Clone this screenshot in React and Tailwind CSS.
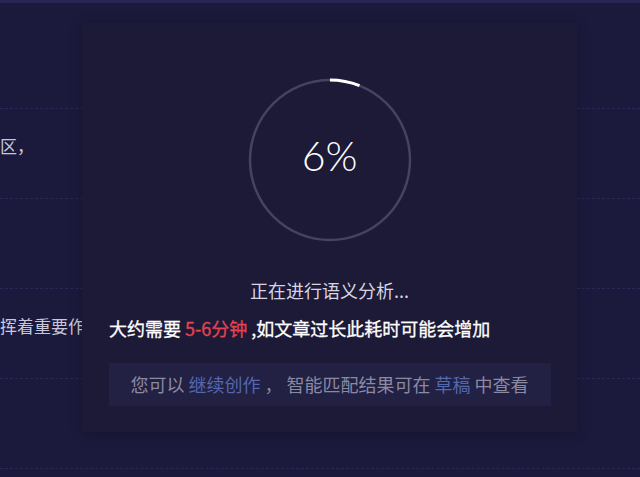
import React from 'react';

const PROGRESS = 6;
const R = 80;
const CIRC = 2 * Math.PI * R;

const rows = [
  { text: '区，' },
  { text: '' },
  { text: '挥着重要作用' },
  { text: '' },
];

export default function App() {
  return (
    <div
      className="relative w-[640px] h-[477px] overflow-hidden bg-[#1b1a3d] text-[18px]"
      style={{ fontFamily: '"Noto Sans CJK SC", "Noto Sans", sans-serif' }}
    >
      {/* top edge */}
      <div className="h-[3px] bg-[#272552]" />

      {/* page behind the dialog */}
      <div className="pt-[105px]">
        {rows.map((row, i) => (
          <div key={i} className="h-[90px] border-t border-dashed border-[#292857]">
            {row.text && (
              <p className="pt-[27px] text-[17px] text-[#c9c8da] leading-[20px] whitespace-nowrap">{row.text}</p>
            )}
          </div>
        ))}
        <div className="border-t border-dashed border-[#292857]" />
      </div>

      {/* dialog */}
      <div className="absolute left-[82px] top-[23px] w-[495px] h-[409px] bg-[#1c1a37] shadow-[0_2px_12px_rgba(0,0,0,0.25)] flex flex-col items-center pt-[55px]">
        <div className="relative w-[164px] h-[164px]">
          <svg width="164" height="164" viewBox="0 0 164 164">
            <circle cx="82" cy="82" r={R} fill="none" stroke="#45435f" strokeWidth="2.5" />
            <circle
              cx="82"
              cy="82"
              r={R}
              fill="none"
              stroke="#ffffff"
              strokeWidth="3"
              strokeDasharray={`${(CIRC * PROGRESS) / 100} ${CIRC}`}
              transform="rotate(-90 82 82)"
            />
          </svg>
          <div
            className="absolute inset-0 pb-[8px] flex items-center justify-center text-white text-[41px] font-light"
            style={{ fontFamily: 'Lato, "Open Sans", sans-serif' }}
          >
            {PROGRESS}%
          </div>
        </div>

        <p className="mt-[36px] text-[#d6d5e2] leading-[24px]">正在进行语义分析...</p>

        <p className="mt-[14px] self-start ml-[27px] text-white leading-[24px] whitespace-nowrap [-webkit-text-stroke:0.3px_white]">
          大约需要 <span className="text-[#e5434f] [-webkit-text-stroke:0.3px_#e5434f]">5-6分钟</span> ,如文章过长此耗时可能会增加
        </p>

        <div className="mt-[23px] w-[442px] h-[43px] bg-[#222043] flex items-center justify-center text-[#8b8aa3] whitespace-nowrap">
          您可以&nbsp;<span className="text-[#5468b0]">继续创作</span>&nbsp;，&nbsp;智能匹配结果可在&nbsp;
          <span className="text-[#5468b0]">草稿</span>&nbsp;中查看
        </div>
      </div>
    </div>
  );
}
